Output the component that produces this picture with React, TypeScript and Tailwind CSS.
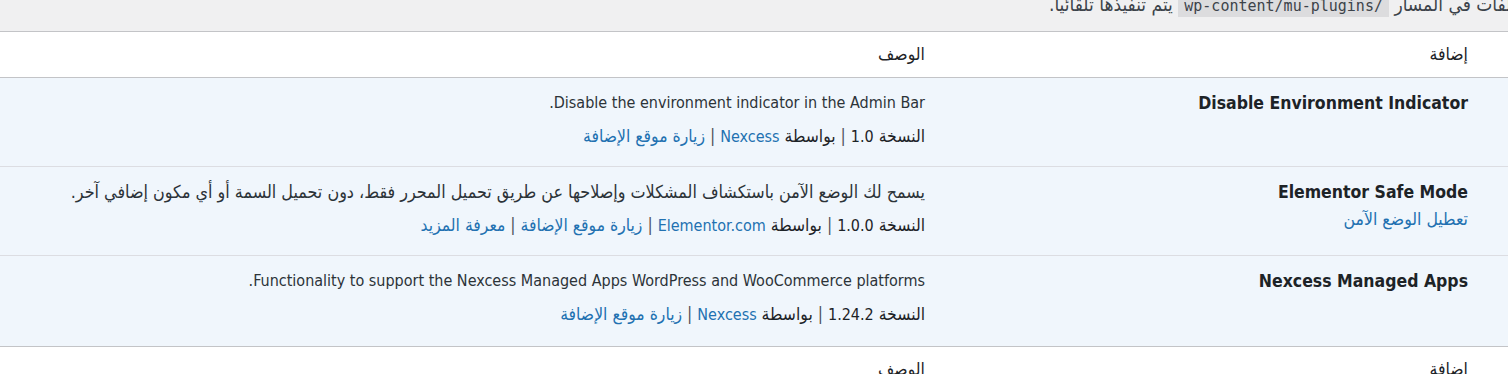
import React from "react";

const font = "font-['DejaVu_Sans_Condensed','DejaVu_Sans',sans-serif]";

function Sep() {
  return <span className="text-[#50575e]"> | </span>;
}

function Row({
  title,
  action,
  desc,
  descAr,
  meta,
  h,
}: {
  title: string;
  action?: string;
  desc: string;
  descAr?: boolean;
  meta: React.ReactNode;
  h: string;
}) {
  return (
    <div className={`flex bg-[#f0f6fc] ${h}`}>
      <div className="w-[573px] shrink-0 pr-[40px] pt-[14px]">
        <div className="text-[17.5px] font-bold leading-[22px] text-[#1d2327]">{title}</div>
        {action && (
          <div className="mt-[5px] text-[17.5px] leading-[22px] text-[#2271b1]">{action}</div>
        )}
      </div>
      <div className="flex-1 pr-[10px] pl-[10px] pt-[14px]">
        <div
          className={`${descAr ? "text-[17.8px]" : "text-[16px]"} whitespace-nowrap leading-[22px] text-[#2c3338]`}
        >
          {desc}
        </div>
        <div className="mt-[11px] whitespace-nowrap text-[17.4px] leading-[22px] text-[#1d2327]">
          {meta}
        </div>
      </div>
    </div>
  );
}

function A({ children }: { children: React.ReactNode }) {
  return <span className="text-[#2271b1]">{children}</span>;
}

function En({ children }: { children: React.ReactNode }) {
  return <span className="text-[16px]">{children}</span>;
}

export default function App() {
  return (
    <div dir="rtl" className={`${font} w-[1508px] h-[374px] overflow-hidden bg-white`}>
      <div className="h-[31px] overflow-hidden bg-[#f0f0f1]">
        <div className="mr-[-13px] mt-[-7px] whitespace-nowrap text-[19px] leading-[22px] text-[#3c434a]">
          ملفات في المسار{" "}
          <code className="bg-[#dcdcde] px-[6px] pt-[3px] pb-[2px] font-['DejaVu_Sans_Mono',monospace] text-[15px] text-[#3c434a]">
            /wp-content/mu-plugins
          </code>{" "}
          يتم تنفيذها تلقائيا.
        </div>
      </div>
      <div className="border-t border-[#c3c4c7]">
        <div className="flex h-[46px] items-center border-b border-[#c3c4c7] text-[17.5px] text-[#1d2327]">
          <div className="w-[573px] shrink-0 pr-[40px]">إضافة</div>
          <div className="flex-1 pr-[10px]">الوصف</div>
        </div>
        <Row
          h="h-[89px] border-b border-[#dcdde2]"
          title="Disable Environment Indicator"
          desc="Disable the environment indicator in the Admin Bar."
          meta={
            <>
              النسخة <En>1.0</En>
              <Sep />
              بواسطة <A><En>Nexcess</En></A>
              <Sep />
              <A>زيارة موقع الإضافة</A>
            </>
          }
        />
        <Row
          h="h-[89px] border-b border-[#dcdde2]"
          title="Elementor Safe Mode"
          action="تعطيل الوضع الآمن"
          descAr
          desc="يسمح لك الوضع الآمن باستكشاف المشكلات وإصلاحها عن طريق تحميل المحرر فقط، دون تحميل السمة أو أي مكون إضافي آخر."
          meta={
            <>
              النسخة <En>1.0.0</En>
              <Sep />
              بواسطة <A><En>Elementor.com</En></A>
              <Sep />
              <A>زيارة موقع الإضافة</A>
              <Sep />
              <A>معرفة المزيد</A>
            </>
          }
        />
        <Row
          h="h-[90px]"
          title="Nexcess Managed Apps"
          desc="Functionality to support the Nexcess Managed Apps WordPress and WooCommerce platforms."
          meta={
            <>
              النسخة <En>1.24.2</En>
              <Sep />
              بواسطة <A><En>Nexcess</En></A>
              <Sep />
              <A>زيارة موقع الإضافة</A>
            </>
          }
        />
        <div className="flex h-[46px] items-center border-t border-[#c3c4c7] text-[17.5px] text-[#1d2327]">
          <div className="w-[573px] shrink-0 pr-[40px]">إضافة</div>
          <div className="flex-1 pr-[10px]">الوصف</div>
        </div>
      </div>
    </div>
  );
}
